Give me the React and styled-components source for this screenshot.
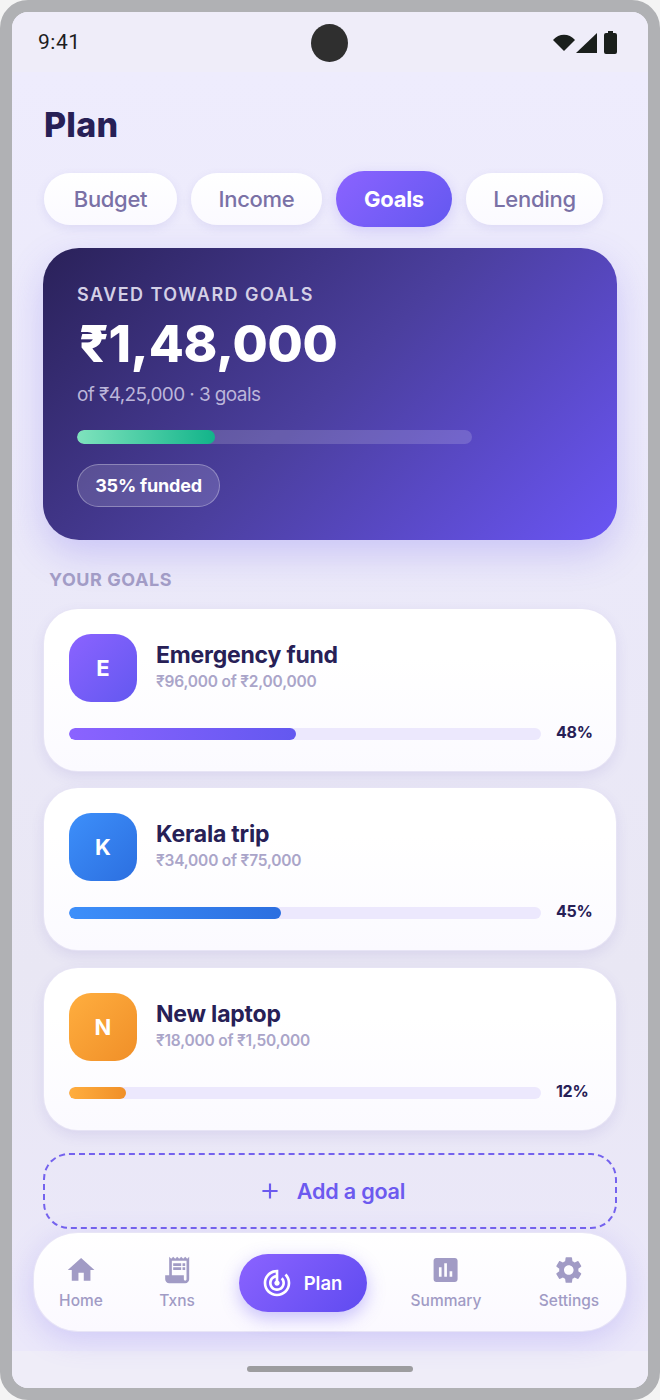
import React from 'react';
import styled, { createGlobalStyle } from 'styled-components';
import { MdHome, MdReceiptLong, MdTrackChanges, MdAssessment, MdSettings, MdAdd } from 'react-icons/md';

const Global = createGlobalStyle`
  html, body { margin: 0; padding: 0; background: #f4f4f4; }
  * { box-sizing: border-box; }
  body { font-family: Inter, "Noto Sans", sans-serif; }
`;

const Frame = styled.div`
  width: 660px; height: 1400px; border: 12px solid #b0b1b4; border-radius: 28px;
  overflow: hidden; display: flex; flex-direction: column; background: #efedf8;
`;
const StatusBar = styled.div`
  height: 60px; flex: none; display: flex; align-items: center; justify-content: space-between;
  padding: 0 30px 0 26px; position: relative; background: #efedf9;
`;
const Time = styled.span`
  font-family: Roboto, sans-serif; font-size: 21px; color: #1d1d1f; letter-spacing: .5px;
`;
const Camera = styled.div`
  position: absolute; left: 299px; top: 12px; width: 37px; height: 38px; border-radius: 50%; background: #2f2f2f;
`;
const StatusIcons = styled.svg`width: 66px; height: 24px; display: block;`;
const Main = styled.main`
  flex: 1; min-height: 0; display: flex; flex-direction: column; padding: 0 31px;
  background: linear-gradient(180deg, #eeecfd 0%, #ebe9f9 38%, #e9e7f4 70%, #ebe8fa 100%);
`;
const Title = styled.h1`
  margin: 30px 0 0 1px; font-size: 34px; line-height: 46px; font-weight: 800; color: #272056; letter-spacing: .2px;
`;
const Tabs = styled.div`
  display: flex; align-items: center; gap: 14px; margin: 23px 0 0 1px;
`;
const Tab = styled.div`
  flex: none; width: ${p => p.$w}px; height: ${p => (p.$active ? 56 : 52)}px; border-radius: 28px;
  display: flex; align-items: center; justify-content: center;
  font-size: 22px; font-weight: ${p => (p.$active ? 700 : 500)};
  color: ${p => (p.$active ? '#fff' : '#7a71a6')};
  background: ${p => (p.$active ? 'linear-gradient(135deg, #8b63ff, #6358f0)' : 'linear-gradient(180deg, #fff, #fbfaff)')};
  box-shadow: ${p => (p.$active ? '0 4px 14px rgba(108,92,240,.2)' : '0 3px 10px rgba(110,95,200,.12)')};
  letter-spacing: -.3px;
`;
const Hero = styled.section`
  margin-top: 21px; height: 292px; border-radius: 36px; padding: 35px 34px 0; flex: none;
  background: linear-gradient(135deg, #2a2159 0%, #4b3f9e 50%, #6a55f5 100%);
  box-shadow: 0 14px 36px rgba(108,92,240,.25);
  display: flex; flex-direction: column; align-items: flex-start;
`;
const HeroLabel = styled.div`
  font-size: 18px; line-height: 24px; font-weight: 600; letter-spacing: 1.45px; color: #d4d0e6;
`;
const HeroAmount = styled.div`
  font-size: 51px; line-height: 60px; font-weight: 800; color: #fff; margin: 7px 0 0 2px; letter-spacing: -.2px;
`;
const HeroSub = styled.div`
  font-size: 19px; line-height: 24px; color: #bcb6da; margin-top: 9px; letter-spacing: -.6px;
`;
const HeroTrack = styled.div`
  width: 395px; height: 14px; border-radius: 7px; background: rgba(255,255,255,.16); margin-top: 23px; overflow: hidden;
`;
const HeroFill = styled.div`
  height: 100%; border-radius: 7px; background: linear-gradient(90deg, #7fe3bd, #12b48a);
`;
const Badge = styled.div`
  margin-top: 20px; height: 43px; width: 143px; border-radius: 22px; border: 1px solid rgba(255,255,255,.3);
  background: rgba(255,255,255,.14); color: #fff; font-size: 18px; font-weight: 700;
  display: flex; align-items: center; justify-content: center; letter-spacing: -.2px;
`;
const Section = styled.div`
  margin: 28px 0 0 6px; font-size: 18px; line-height: 24px; font-weight: 700; color: #a29cc6; letter-spacing: .55px;
`;
const Cards = styled.div`
  display: flex; flex-direction: column; gap: 17.5px; margin: 16.7px 1px 0;
`;
const Card = styled.article`
  height: 162px; border-radius: 34px; padding: 25px 25px 0; flex: none;
  background: linear-gradient(180deg, #fff 30%, #fbfaff 100%);
  box-shadow: 0 0 0 1px #e7e4f5, 0 5px 14px rgba(90,75,180,.12);
`;
const CardTop = styled.div`display: flex; align-items: center; gap: 19px;`;
const Avatar = styled.div`
  width: 68px; height: 68px; border-radius: 22px; flex: none; color: #fff; font-size: 22px; font-weight: 700;
  display: flex; align-items: center; justify-content: center;
  background: linear-gradient(135deg, ${p => p.$from}, ${p => p.$to});
`;
const CardText = styled.div`display: flex; flex-direction: column; margin-top: -3px;`;
const CardTitle = styled.div`
  font-size: 23px; line-height: 30px; font-weight: 700; color: #272056; letter-spacing: -.2px;
`;
const CardSub = styled.div`
  font-size: 15.5px; line-height: 22px; margin-top: 1px; font-weight: 600; color: #aaa5c9; letter-spacing: -.2px;
`;
const ProgressRow = styled.div`display: flex; align-items: center; gap: 15px; margin-top: 25px; height: 14px;`;
const Track = styled.div`
  flex: none; width: 472px; height: 12px; border-radius: 6px; background: #ece8fd; overflow: hidden;
`;
const Fill = styled.div`
  height: 100%; border-radius: 6px; background: linear-gradient(90deg, ${p => p.$from}, ${p => p.$to});
`;
const Pct = styled.div`font-size: 16px; font-weight: 700; color: #272056; letter-spacing: -.3px; margin-top: -4px;`;
const AddGoal = styled.div`
  flex: none; margin-top: 23.3px; height: 76px; border-radius: 26px; border: 2px dashed #7462ee;
  display: flex; align-items: center; justify-content: center; gap: 14px;
  color: #6c5aef; font-size: 21.6px; font-weight: 600; letter-spacing: -.2px; padding-left: 2px;
  svg { font-size: 26px; }
`;
const Nav = styled.nav`
  flex: none; margin: 4px -9px 0; height: 98px; border-radius: 44px; display: flex; align-items: center;
  background: linear-gradient(180deg, #fff, #fbf9ff); position: relative;
  box-shadow: 0 0 0 1px #e8e5f6, 0 8px 30px rgba(110,90,240,.22);
`;
const NavItem = styled.div`
  position: absolute; left: ${p => p.$c}px; top: 21px; transform: translateX(-50%);
  display: flex; flex-direction: column; align-items: center; color: #a19bc5;
  font-size: 15.5px; font-weight: 500; line-height: 20px; white-space: nowrap;
  svg { font-size: 32px; display: block; margin-bottom: 5px; }
`;
const NavPill = styled.div`
  position: absolute; left: 205px; top: 21px; width: 128px; height: 58px; border-radius: 29px;
  display: flex; align-items: center; justify-content: center; gap: 11px; color: #fff; font-size: 18.5px; font-weight: 600;
  background: linear-gradient(135deg, #8b63ff, #5f4bf0);
  box-shadow: 0 6px 18px rgba(100,80,240,.35);
  svg { font-size: 32px; margin-left: -3px; }
`;
const GestureStrip = styled.div`
  height: 37px; flex: none; background: #efedf8; display: flex; justify-content: center; padding-top: 15px;
`;
const Gesture = styled.div`width: 166px; height: 6px; border-radius: 3px; background: #9d9d9f;`;

const goals = [
  { l: 'E', t: 'Emergency fund', s: '₹96,000 of ₹2,00,000', p: 48, from: '#8b63ff', to: '#6358f0' },
  { l: 'K', t: 'Kerala trip', s: '₹34,000 of ₹75,000', p: 45, from: '#3d8ffa', to: '#2c6fe0' },
  { l: 'N', t: 'New laptop', s: '₹18,000 of ₹1,50,000', p: 12, from: '#ffae3f', to: '#f08f28' },
];

export default function App() {
  return (
    <>
      <Global />
      <Frame>
        <StatusBar>
          <Time>9:41</Time>
          <Camera />
          <StatusIcons viewBox="0 0 66 24">
            <path d="M1 10 C7 3 17 3 23 10 L12 21 Z" fill="#1a1f1c" />
            <path d="M24 23 L45 3 V23 Z" fill="#1a1f1c" />
            <path d="M52 5 a2 2 0 0 1 2-2 h2 V1 h5 v2 h2 a2 2 0 0 1 2 2 v17 a2 2 0 0 1-2 2 h-9 a2 2 0 0 1-2-2 Z" fill="#1a1f1c" />
          </StatusIcons>
        </StatusBar>
        <Main>
          <Title>Plan</Title>
          <Tabs>
            <Tab $w={133}>Budget</Tab>
            <Tab $w={131}>Income</Tab>
            <Tab $w={116} $active>Goals</Tab>
            <Tab $w={137}>Lending</Tab>
          </Tabs>
          <Hero>
            <HeroLabel>SAVED TOWARD GOALS</HeroLabel>
            <HeroAmount>₹1,48,000</HeroAmount>
            <HeroSub>of ₹4,25,000 · 3 goals</HeroSub>
            <HeroTrack><HeroFill style={{ width: '35%' }} /></HeroTrack>
            <Badge>35% funded</Badge>
          </Hero>
          <Section>YOUR GOALS</Section>
          <Cards>
            {goals.map(g => (
              <Card key={g.l}>
                <CardTop>
                  <Avatar $from={g.from} $to={g.to}>{g.l}</Avatar>
                  <CardText>
                    <CardTitle>{g.t}</CardTitle>
                    <CardSub>{g.s}</CardSub>
                  </CardText>
                </CardTop>
                <ProgressRow>
                  <Track><Fill $from={g.from} $to={g.to} style={{ width: `${g.p}%` }} /></Track>
                  <Pct>{g.p}%</Pct>
                </ProgressRow>
              </Card>
            ))}
          </Cards>
          <AddGoal><MdAdd />Add a goal</AddGoal>
          <Nav>
            <NavItem $c={47}><MdHome />Home</NavItem>
            <NavItem $c={143}><MdReceiptLong />Txns</NavItem>
            <NavPill><MdTrackChanges />Plan</NavPill>
            <NavItem $c={412}><MdAssessment />Summary</NavItem>
            <NavItem $c={535}><MdSettings />Settings</NavItem>
          </Nav>
        </Main>
        <GestureStrip><Gesture /></GestureStrip>
      </Frame>
    </>
  );
}
